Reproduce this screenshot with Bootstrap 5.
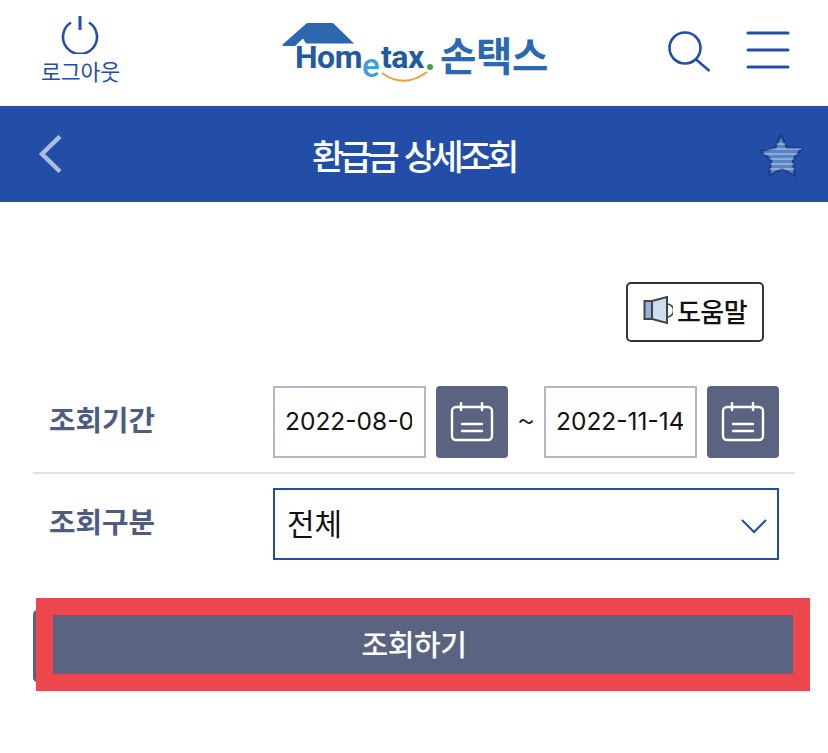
<!DOCTYPE html>
<html lang="ko">
<head>
  <meta charset="UTF-8">
  <meta name="viewport" content="width=device-width, initial-scale=1.0">
  <title>환급금 상세조회</title>
  <link rel="stylesheet" href="https://cdn.jsdelivr.net/npm/bootstrap@5.3.0/dist/css/bootstrap.min.css">
  <style>
    body {
      font-family: "Noto Sans CJK KR", "Noto Sans", sans-serif;
      background: #fff;
      position: relative;
      min-height: 753px;
      overflow: hidden;
    }
    .top-head { height: 106px; }
    .logout-box { width: 78px; margin-left: 41px; margin-top: -7px; color: #224ea8; font-size: 21.7px; line-height: 24px; font-weight: 400; letter-spacing: -.2px; white-space: nowrap; }
    .logout-box svg { display: block; margin: 0 auto 5px; }
    .logo-box { margin-left: 163px; }
    .logo-name { color: #2b68b0; font-size: 39.5px; font-weight: 700; line-height: 1; margin-left: 6px; letter-spacing: -.4px; margin-top: 2px; }
    .head-icons { margin-left: 120px; gap: 34px; }
    .menu-icon { margin-top: -6px; }
    .title-bar { height: 96px; background: #224ea8; padding: 0 24px 0 38px; }
    .title-text { color: #fff; font-size: 35px; font-weight: 500; letter-spacing: -4.4px; word-spacing: 3px; margin: 0 0 0 9px; line-height: 1; flex: 1; text-align: center; }
    .page-body { padding: 80px 33px 0; }
    .help-row { margin-right: 31px; }
    .help-btn { width: 138px; height: 60px; padding: 0 0 4px; border: 2px solid #333; border-radius: 5px; background: #fff; color: #111; font-size: 26px; font-weight: 500; letter-spacing: -.6px; }
    .form-line.first { margin-top: 44px; border-bottom: 2px solid #dedfe7; height: 88px; padding-bottom: 14px; }
    .form-line.second { margin-top: 14px; height: 72px; }
    .line-label { width: 240px; padding-left: 16px; margin-top: -7px; color: #4d5c80; font-size: 28.800px; font-weight: 700; }
    .date-input.form-control { width: 153px; height: 72px; border: 2px solid #b3b6c3; border-radius: 0; padding: 0 12px 3px 10px; color: #111; font-family: Inter, "Noto Sans", sans-serif; font-size: 24.500px; }
    .cal-btn { width: 72px; height: 72px; margin-left: 10px; background: #5a6480; border: 0; border-radius: 4px; padding: 0; }
    .tilde-mark { width: 36px; margin-top: -4px; text-align: center; color: #222; font-size: 30px; line-height: 1; }
    .kind-select.form-select { width: 506px; height: 72px; border: 2px solid #224ea8; border-radius: 0; padding: 0 12px 3px; color: #111; font-size: 30px; background-size: 26px 16px; background-position: right 10px top 29px;
      background-image: url("data:image/svg+xml,%3Csvg xmlns='http://www.w3.org/2000/svg' viewBox='0 0 26 16'%3E%3Cpath d='M1 1l12 12L25 1' fill='none' stroke='%23224ea8' stroke-width='2'/%3E%3C/svg%3E"); }
    .search-btn { height: 72px; margin-top: 50px; padding-bottom: 10px; background: #5a6480; border-color: #5a6480; border-radius: 4px; color: #fff; font-size: 29px; font-weight: 500; letter-spacing: -.4px; }
    .red-frame { position: absolute; left: 36px; top: 598px; width: 774px; height: 93px; border: 17px solid #ec474d; pointer-events: none; }
  </style>
</head>
<body>
  <header class="top-head d-flex align-items-center">
    <a class="logout-box text-center text-decoration-none" href="#">
      <svg width="38" height="38" viewBox="0 0 38 38" fill="none" stroke="#224ea8" stroke-width="2.6">
        <path d="M10 6.5a17 17 0 1 0 18 0"/>
        <path d="M19 0v14" stroke-width="3"/>
      </svg>
      로그아웃
    </a>
    <div class="logo-box d-flex align-items-center">
      <svg width="152" height="62" viewBox="0 0 152 62">
        <path d="M0 23 25 1h26l21 20.500H24l-3-5L13 24H1z" fill="#2b68b0"/>
        <text x="13" y="46" font-family="Roboto, sans-serif" font-weight="700" font-size="32" fill="#22599f" letter-spacing="-.5">Hom</text>
        <text x="80" y="55" font-family="Roboto, sans-serif" font-weight="500" font-size="33" fill="#3f9fd8">e</text>
        <text x="99" y="46" font-family="Roboto, sans-serif" font-weight="700" font-size="32" fill="#22599f" letter-spacing="-.5">tax</text>
        <circle cx="148" cy="45" r="3" fill="#43a047"/>
        <path d="M100 51q22 16 45-1" fill="none" stroke="#e9a23b" stroke-width="2"/>
      </svg>
      <span class="logo-name">손택스</span>
    </div>
    <div class="head-icons d-flex align-items-center">
      <svg width="44" height="44" viewBox="0 0 44 44" fill="none" stroke="#224ea8" stroke-width="2.6">
        <circle cx="17" cy="17" r="15.500"/>
        <path d="M27.5 28 41.500 40"/>
      </svg>
      <svg class="menu-icon" width="44" height="40" viewBox="0 0 44 40" stroke="#224ea8" stroke-width="3" stroke-linecap="round">
        <path d="M2 3h40M2 20h40M2 37h40"/>
      </svg>
    </div>
  </header>

  <div class="title-bar d-flex align-items-center">
    <svg width="24" height="38" viewBox="0 0 24 38" fill="none" stroke="#a9bddf" stroke-width="4.500">
      <path d="M22 1.500 4 19l18 17.500"/>
    </svg>
    <h1 class="title-text">환급금 상세조회</h1>
    <svg width="48" height="48" viewBox="0 0 48 48">
      <defs>
        <clipPath id="starClip"><path d="M25 4l6 14h15l-9 12 2 16-13-7-13 7 2-16-11-9 15-3z"/></clipPath>
      </defs>
      <path d="M25 4l6 14h15l-9 12 2 16-13-7-13 7 2-16-11-9 15-3z" fill="#5a83c2" stroke="#1b3f8c" stroke-width="2.500" stroke-linejoin="round"/>
      <g clip-path="url(#starClip)" stroke="#c3d2ea" stroke-width="1.200">
        <path d="M0 14h48M0 19h48M0 24h48M0 29h48M0 34h48M0 39h48"/>
      </g>
    </svg>
  </div>

  <main class="page-body">
    <div class="help-row d-flex justify-content-end">
      <button type="button" class="help-btn d-flex align-items-center justify-content-center gap-1">
        <svg width="30" height="28" viewBox="0 0 30 28">
          <path d="M24 8a6 6 0 0 1 0 13" fill="none" stroke="#444" stroke-width="1.600"/>
          <path d="M9 5 24 1v26L9 23z" fill="#cfdeef" stroke="#444" stroke-width="2"/>
          <path d="M1.500 5H9v18H1.500z" fill="#8fb4e0" stroke="#444" stroke-width="2"/>
        </svg>
        도움말
      </button>
    </div>

    <div class="form-line first d-flex align-items-start">
      <label class="line-label align-self-center">조회기간</label>
      <input class="date-input form-control" type="text" value="2022-08-01">
      <button type="button" class="cal-btn d-flex align-items-center justify-content-center" aria-label="달력">
        <svg width="44" height="40" viewBox="0 0 44 40" fill="none" stroke="#fff" stroke-width="2.400" stroke-linecap="round">
          <rect x="2" y="5" width="40" height="33" rx="4"/>
          <path d="M11 1v7M32 1v7M12 22h20M12 29h20"/>
        </svg>
      </button>
      <span class="tilde-mark align-self-center">~</span>
      <input class="date-input form-control" type="text" value="2022-11-14">
      <button type="button" class="cal-btn d-flex align-items-center justify-content-center" aria-label="달력">
        <svg width="44" height="40" viewBox="0 0 44 40" fill="none" stroke="#fff" stroke-width="2.400" stroke-linecap="round">
          <rect x="2" y="5" width="40" height="33" rx="4"/>
          <path d="M11 1v7M32 1v7M12 22h20M12 29h20"/>
        </svg>
      </button>
    </div>

    <div class="form-line second d-flex align-items-center">
      <label class="line-label">조회구분</label>
      <select class="kind-select form-select">
        <option>전체</option>
      </select>
    </div>

    <button type="button" class="search-btn btn w-100">조회하기</button>
  </main>

  <div class="red-frame"></div>

  <script src="https://cdn.jsdelivr.net/npm/bootstrap@5.3.0/dist/js/bootstrap.bundle.min.js"></script>
</body>
</html>
